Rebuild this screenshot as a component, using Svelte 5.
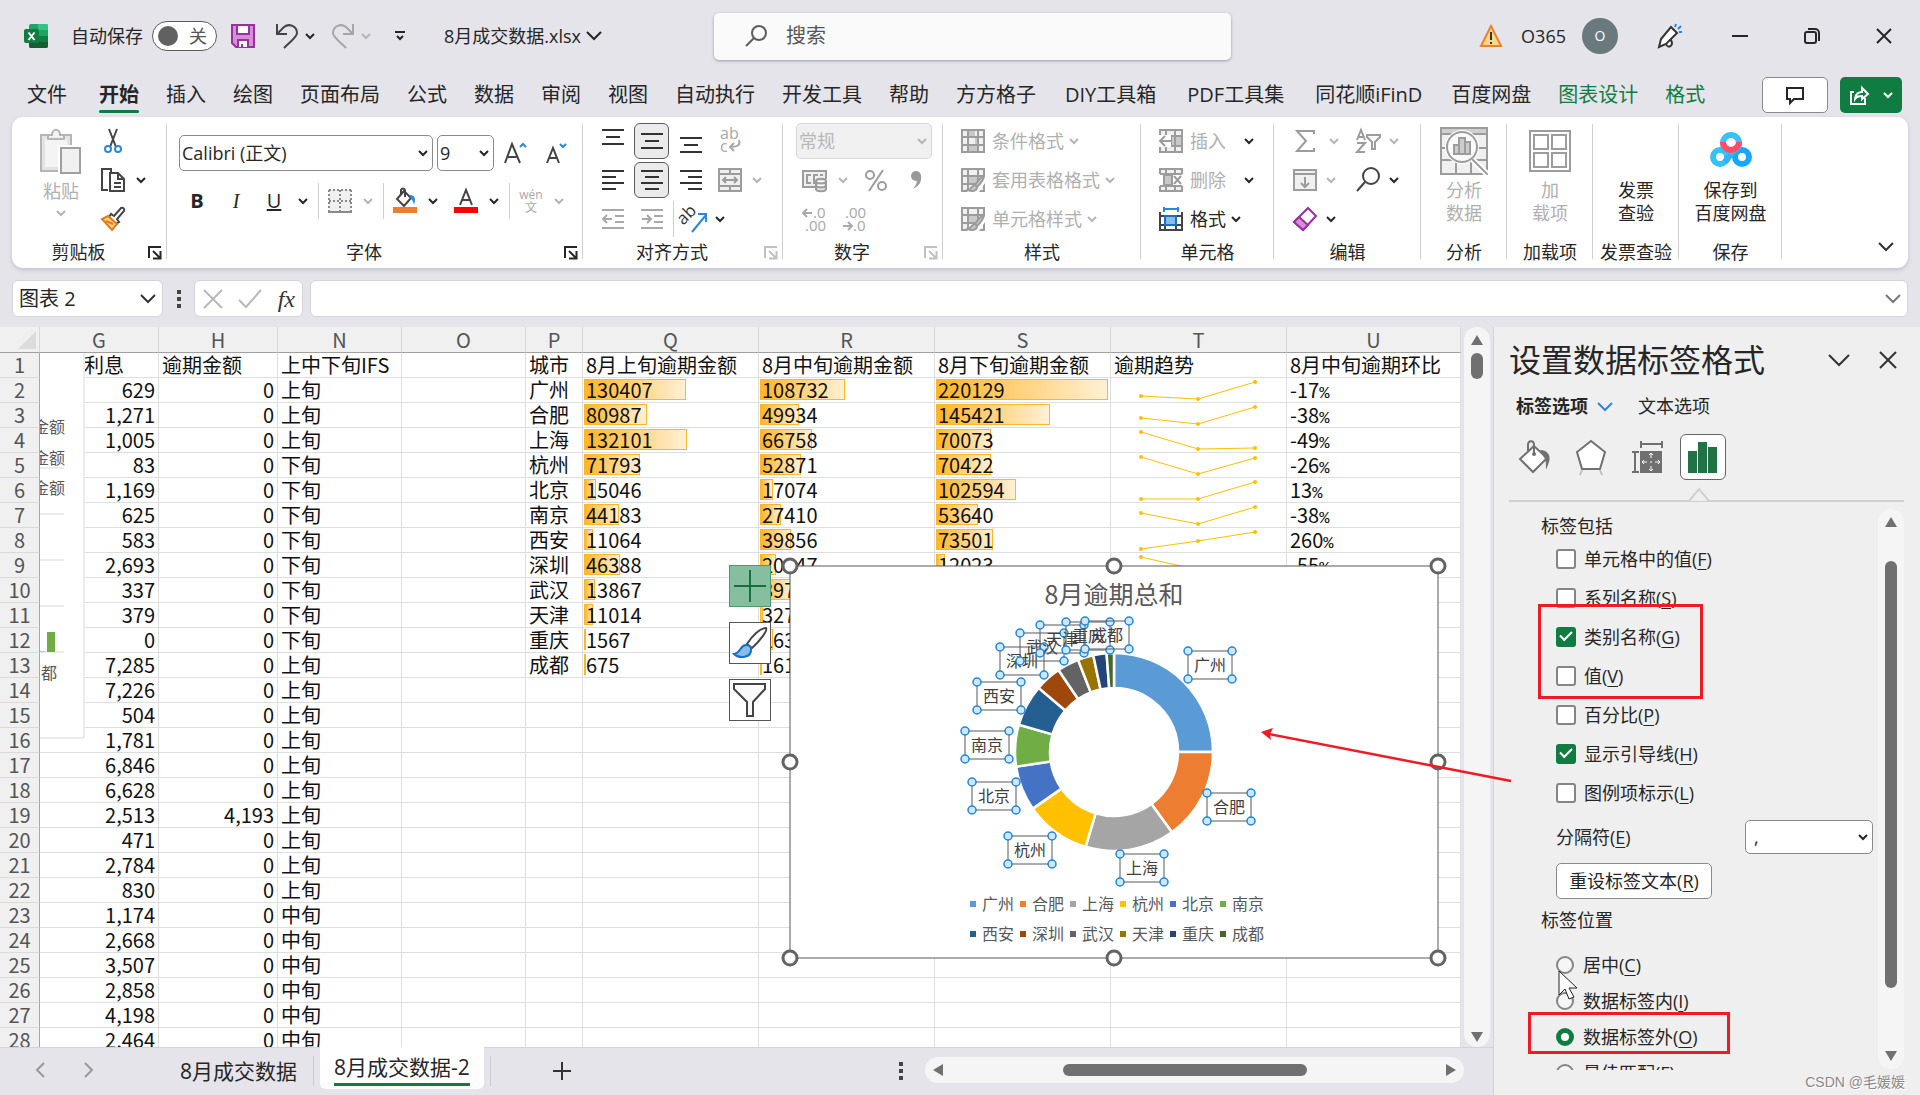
<script>
  const tabs = ['文件', '开始', '插入', '绘图', '页面布局', '公式', '数据', '审阅', '视图', '自动执行', '开发工具', '帮助', '方方格子', 'DIY工具箱', 'PDF工具集', '同花顺iFinD', '百度网盘', '图表设计', '格式'];
  const cols = ['G', 'H', 'N', 'O', 'P', 'Q', 'R', 'S', 'T', 'U'];

  const interest = ['629', '1,271', '1,005', '83', '1,169', '625', '583', '2,693', '337', '379', '0', '7,285', '7,226', '504', '1,781', '6,846', '6,628', '2,513', '471', '2,784', '830', '1,174', '2,668', '3,507', '2,858', '4,198', '2,464'];
  const cities = [
    { name: '广州', v: [130407, 108732, 220129], pct: '-17' },
    { name: '合肥', v: [80987, 49934, 145421], pct: '-38' },
    { name: '上海', v: [132101, 66758, 70073], pct: '-49' },
    { name: '杭州', v: [71793, 52871, 70422], pct: '-26' },
    { name: '北京', v: [15046, 17074, 102594], pct: '13' },
    { name: '南京', v: [44183, 27410, 53640], pct: '-38' },
    { name: '西安', v: [11064, 39856, 73501], pct: '260' },
    { name: '深圳', v: [46388, 20347, 12023], pct: '-55' },
    { name: '武汉', v: [13867, 39786] },
    { name: '天津', v: [11014, 3271] },
    { name: '重庆', v: [1567, 16327] },
    { name: '成都', v: [675, 1610] }
  ];
  const period = (row) => (row <= 4 || (row >= 13 && row <= 22) ? '上旬' : row <= 12 ? '下旬' : '中旬');
  const rows = interest.map((g, i) => ({
    n: i + 2,
    g,
    h: i === 17 ? '4,193' : '0',
    p: period(i + 2),
    c: cities[i]
  }));
  const peak = 220129;
  const spark = (v) => {
    const lo = Math.min(...v);
    const hi = Math.max(...v);
    return v.map((x, i) => [30 + i * 57, Math.round(21 - ((x - lo) / (hi - lo)) * 17)]);
  };

  const slices = [
    { name: '广州', end: 90, color: '#5b9bd5', x: 398, y: 85 },
    { name: '合肥', end: 144.2, color: '#ed7d31', x: 417, y: 227 },
    { name: '上海', end: 196.7, color: '#a5a5a5', x: 330, y: 288 },
    { name: '杭州', end: 235.1, color: '#ffc000', x: 218, y: 270 },
    { name: '北京', end: 261.5, color: '#4472c4', x: 182, y: 216 },
    { name: '南京', end: 286, color: '#70ad47', x: 175, y: 165 },
    { name: '西安', end: 310.4, color: '#255e91', x: 187, y: 116 },
    { name: '深圳', end: 325.9, color: '#9e480e', x: 210, y: 81 },
    { name: '武汉', end: 338.7, color: '#636363', x: 230, y: 67 },
    { name: '天津', end: 347.9, color: '#997300', x: 250, y: 59 },
    { name: '重庆', end: 355.7, color: '#264478', x: 276, y: 56 },
    { name: '成都', end: 360, color: '#43682b', x: 295, y: 55 }
  ];
  const CX = 324;
  const CY = 186;
  const pt = (r, deg) => {
    const a = (deg * Math.PI) / 180;
    return `${(CX + r * Math.sin(a)).toFixed(2)} ${(CY - r * Math.cos(a)).toFixed(2)}`;
  };
  const arc = (a, b) => `M${pt(99, a)}A99 99 0 0 1 ${pt(99, b)}L${pt(64, b)}A64 64 0 0 0 ${pt(64, a)}Z`;
  const handles = [[0, 0], [324, 0], [648, 0], [0, 196], [648, 196], [0, 392], [324, 392], [648, 392]];

  let checks = $state([
    { t: '单元格中的值', k: 'F', on: false },
    { t: '系列名称', k: 'S', on: false },
    { t: '类别名称', k: 'G', on: true },
    { t: '值', k: 'V', on: false },
    { t: '百分比', k: 'P', on: false },
    { t: '显示引导线', k: 'H', on: true },
    { t: '图例项标示', k: 'L', on: false }
  ]);
  let position = $state('O');
  const positions = [
    { t: '居中', k: 'C' },
    { t: '数据标签内', k: 'I' },
    { t: '数据标签外', k: 'O' },
    { t: '最佳匹配', k: 'F' }
  ];
</script>

{#snippet chev(off = false)}
  <svg class="chev" class:off width="20" height="20" viewBox="0 0 20 20"><path d="M6 8l4 4 4-4" /></svg>
{/snippet}
{#snippet launcher(off = false)}
  <button class="launch" class:off aria-label="更多选项">
    <svg width="14" height="14" viewBox="0 0 14 14"><path d="M1 12V1h12M5 5l7 7M12.5 5v7.5H5" /></svg>
  </button>
{/snippet}
{#snippet lines(a, y0, short, n = 3)}
  <svg width="24" height="24" viewBox="0 0 24 24" class="ln">
    {#each Array(n) as _, i}
      {@const w = i % 2 ? short : 22}
      {@const x = a === 'l' ? 1 : a === 'r' ? 23 - w : 12 - w / 2}
      <path d="M{x} {y0 + i * (n === 4 ? 6 : 7)}h{w}" />
    {/each}
  </svg>
{/snippet}
{#snippet tableIcon(kind)}
  <svg width="24" height="24" viewBox="0 0 24 24" class="tbl">
    <rect x="1" y="1" width="22" height="22" fill="#f0f0f0" />
    {#if kind === 'cond'}
      <path d="M6 1h8v7H6zM6 16h12v6H6zM14 8h4v8h-4z" fill="#c8c8c8" stroke="none" />
    {:else}
      <path d="M7 8h10v8H7z" fill="#c8c8c8" stroke="none" />
    {/if}
    <path d="M1 1h22v22H1zM1 8h22M1 16h22M7 1v22M17 1v22" />
    {#if kind === 'brush'}
      <path d="M24 7l-9 9-9 8h12l6-9z" fill="#fff" stroke="none" />
      <path d="M23 8c-3 1-7 6-9 9l2 2c3-3 7-7 7-11zM14 17c-3 0-3 4-7 5 4 2 9 1 9-3z" fill="#c8c8c8" />
    {/if}
  </svg>
{/snippet}

<div class="app">
  <header class="title">
    <div class="t-left">
      <svg width="24" height="24" viewBox="0 0 24 24">
        <rect x="5" y="0" width="19" height="24" rx="2" fill="#21a366" />
        <path d="M14 0h8a2 2 0 0 1 2 2v4H14z" fill="#33c481" />
        <path d="M5 12h9v6H5z" fill="#107c41" /><path d="M14 12h10v6H14z" fill="#107c41" />
        <path d="M5 18h19v4a2 2 0 0 1-2 2H7a2 2 0 0 1-2-2z" fill="#185c37" />
        <rect x="0" y="5" width="15" height="14" rx="2" fill="#107c41" />
        <path d="M4.500 8.500l6 7.500M10.500 8.500l-6 7.500" stroke="#fff" stroke-width="2" />
      </svg>
      <span class="auto">自动保存</span>
      <button class="toggle" role="switch" aria-checked="false"><i></i>关</button>
      <button class="ic save" aria-label="保存">
        <svg width="24" height="24" viewBox="0 0 24 24"><path d="M1 1h22v22H5l-4-4z" fill="#d48fd8" stroke="#9a2fa0" stroke-width="2" /><path d="M6 1h12v9H6zM7 23v-7h10v7" fill="#fff" stroke="#9a2fa0" stroke-width="2" /><path d="M11 20v3" stroke="#9a2fa0" stroke-width="2" /></svg>
      </button>
      <button class="ic undo" aria-label="撤消">
        <svg width="24" height="24" viewBox="0 0 24 24"><path d="M2 0v10h10M2 10l7-7c5-4 13-1 13 6 0 4-5 7-13 15" /></svg>
      </button>
      {@render chev()}
      <button class="ic redo" aria-label="恢复">
        <svg width="24" height="24" viewBox="0 0 24 24"><path d="M22 0v10H12M22 10l-7-7C10-1 2 2 2 9c0 4 5 7 13 15" /></svg>
      </button>
      {@render chev(true)}
      <svg class="cust" width="12" height="12" viewBox="0 0 12 12"><path d="M1 2h10M3 6l3 3 3-3" /></svg>
      <span class="file">8月成交数据.xlsx</span>
      <svg class="big" width="16" height="16" viewBox="0 0 16 16"><path d="M1 4l7 7 7-7" /></svg>
    </div>
    <label class="search">
      <svg width="22" height="22" viewBox="0 0 22 22"><circle cx="14" cy="8" r="7" /><path d="M9 13l-8 8" /></svg>
      <input type="text" placeholder="搜索" aria-label="搜索" />
    </label>
    <div class="t-right">
      <svg class="warn" width="24" height="24" viewBox="0 0 24 24"><path d="M12 2l10 20H2z" fill="#fbd98c" stroke="#e8832a" stroke-width="2" /><path d="M12 8v8M12 18v2" stroke="#333" stroke-width="2" /></svg>
      <span class="acct">O365</span>
      <span class="avatar">O</span>
      <svg class="mega" width="26" height="26" viewBox="0 0 26 26"><path d="M2 24l2-8L14 4l6 6L9 21zM9 21c2 5 8 2 5-4" fill="#fff" stroke="#333" stroke-width="2" /><path d="M18 4l1-3M21 6l3-3M22 9h3" stroke="#2b88d8" stroke-width="2" /></svg>
      <button class="win" aria-label="最小化"><svg width="16" height="16" viewBox="0 0 16 16"><path d="M0 8h16" /></svg></button>
      <button class="win" aria-label="还原"><svg width="16" height="16" viewBox="0 0 16 16"><rect x="1" y="4" width="11" height="11" rx="2" /><path d="M4 1h7a4 4 0 0 1 4 4v8" /></svg></button>
      <button class="win" aria-label="关闭"><svg width="16" height="16" viewBox="0 0 16 16"><path d="M1 1l14 14M15 1L1 15" /></svg></button>
    </div>
  </header>

  <nav class="tabs">
    {#each tabs as t, i}
      <button class="tab" class:lead={i === 0} class:active={i === 1} class:latin={/[A-Z]/.test(t)} class:green={i > 16}>{t}</button>
    {/each}
    <button class="comment" aria-label="批注"><svg width="18" height="18" viewBox="0 0 18 18"><path d="M1 2h16v11H8l-4 4v-4H1z" /></svg></button>
    <button class="share" aria-label="共享">
      <svg width="20" height="20" viewBox="0 0 20 20"><path d="M5 7H2v12h14v-6M6 14c0-5 4-7 7-7V3l6 6-6 5v-3c-3 0-5 0-7 3z" /></svg>
      <svg width="10" height="10" viewBox="0 0 10 10"><path d="M1 3l4 4 4-4" stroke-width="2" /></svg>
    </button>
  </nav>

  <section class="ribbon">
    <div class="group g-clip">
      <div class="g-body">
        <button class="paste">
          <svg width="44" height="46" viewBox="0 0 44 46"><path d="M2 6h30v36H2z" fill="#e3e3e3" stroke="#b5b5b5" stroke-width="2" /><path d="M6 10h22v28H6z" fill="#f4f4f4" /><path d="M9 10V6h4c0-7 8-7 8 0h4v4z" fill="#f2f2f2" stroke="#b5b5b5" stroke-width="2" /><path d="M19 16h24v30H19z" fill="#fff" /><path d="M22 19h19v25H22z" fill="#f0f0f0" stroke="#a0a0a0" stroke-width="2" /></svg>
          <span>粘贴</span>
          {@render chev(true)}
        </button>
        <div class="stack">
          <div class="row"><button class="ic" aria-label="剪切"><svg width="24" height="24" viewBox="0 0 24 24"><path d="M8 0l7 18M16 0L9 18" stroke="#444" stroke-width="2" /><circle cx="7" cy="20" r="3" fill="none" stroke="#2b88d8" stroke-width="2" /><circle cx="17" cy="20" r="3" fill="none" stroke="#2b88d8" stroke-width="2" /></svg></button></div>
          <div class="row"><button class="ic" aria-label="复制"><svg width="24" height="24" viewBox="0 0 24 24"><path d="M7 22H1V1h9v3" fill="none" stroke="#444" stroke-width="2" /><path d="M9 5h8l6 6v12H9z" fill="#fff" stroke="#444" stroke-width="2" /><path d="M17 5v6h6M13 15h7M13 19h7" fill="none" stroke="#444" stroke-width="2" /></svg></button>{@render chev()}</div>
          <div class="row"><button class="ic" aria-label="格式刷"><svg width="24" height="24" viewBox="0 0 24 24"><path d="M13 9l7-8c2-1 4 1 3 3l-7 8 2 3-3 2-7-7 2-3z" fill="#fff" stroke="#444" stroke-width="2" /><path d="M7 9l9 8-5 6L1 12z" fill="#fbd08a" stroke="#e07b1a" stroke-width="2" /><path d="M5 14l7 3" stroke="#e07b1a" stroke-width="2" /></svg></button></div>
        </div>
      </div>
      <div class="g-label"><span>剪贴板</span>{@render launcher()}</div>
    </div>

    <div class="group g-font">
      <div class="g-body col">
        <div class="fr1">
          <span class="sel fname"><select aria-label="字体"><option>Calibri (正文)</option></select>{@render chev()}</span>
          <span class="sel fsize"><select aria-label="字号"><option>9</option></select>{@render chev()}</span>
          <button class="ic gr" aria-label="增大字号"><svg width="24" height="24" viewBox="0 0 24 24"><path d="M1 22L8 3l8 19M4 16h9" stroke="#444" stroke-width="2" fill="none" /><path d="M16 6l3-3 3 3" stroke="#2b88d8" stroke-width="2" fill="none" /></svg></button>
          <button class="ic sh" aria-label="减小字号"><svg width="24" height="24" viewBox="0 0 24 24"><path d="M3 22L9 7l6 15M5 17h8" stroke="#444" stroke-width="2" fill="none" /><path d="M16 3l3 3 3-3" stroke="#2b88d8" stroke-width="2" fill="none" /></svg></button>
        </div>
        <div class="fr2">
          <button class="biu b">B</button><button class="biu i">I</button><button class="biu u">U</button>{@render chev()}
          <i class="vs"></i>
          <button class="ic" aria-label="边框"><svg width="24" height="24" viewBox="0 0 24 24"><rect x="1" y="1" width="22" height="21" fill="#f0f0f0" /><path d="M1 1h22M1 12h22M1 1v21M12 1v21M23 1v21" stroke="#8a8a8a" stroke-width="2" stroke-dasharray="2 2" /><path d="M0 23h24" stroke="#8a8a8a" stroke-width="2" /></svg></button>{@render chev(true)}
          <i class="vs"></i>
          <button class="ic" aria-label="填充颜色"><svg width="24" height="24" viewBox="0 0 24 24"><path d="M11 2L4 10l7 7 7-8zM8 6V1c1-2 4-2 4 1v6" fill="#fff" stroke="#444" stroke-width="2" /><path d="M17 6c5 0 6 4 4 10-1-4-2-6-4-7z" fill="#2b88d8" /><path d="M0 18h24v6H0z" fill="#ed7d31" /></svg></button>{@render chev()}
          <button class="ic fc" aria-label="字体颜色"><svg width="24" height="24" viewBox="0 0 24 24"><path d="M6 16l6-15 6 15M8 11h8" fill="none" stroke="#444" stroke-width="2" /><path d="M0 18h24v6H0z" fill="#f00" /></svg></button>{@render chev()}
          <i class="vs"></i>
          <button class="wen" aria-label="拼音指南"><span>wén</span><span>文</span></button>{@render chev(true)}
        </div>
      </div>
      <div class="g-label"><span>字体</span>{@render launcher()}</div>
    </div>

    <div class="group g-align">
      <div class="g-body col">
        <div class="row">
          <button class="al" aria-label="顶端对齐">{@render lines('c', 1, 14)}</button>
          <button class="al on" aria-label="垂直居中">{@render lines('c', 5, 14)}</button>
          <button class="al" aria-label="底端对齐">{@render lines('c', 9, 14)}</button>
          <button class="ic m8" aria-label="自动换行"><svg width="24" height="26" viewBox="0 0 24 26"><text x="2" y="11" font-size="16" fill="#a8a8a8">ab</text><text x="2" y="24" font-size="16" fill="#a8a8a8">c</text><path d="M21 12c2 6-3 7-9 7M16 15l-4 4 4 4" fill="none" stroke="#a8a8a8" stroke-width="2" /></svg></button>
        </div>
        <div class="row">
          <button class="al" aria-label="左对齐">{@render lines('l', 3, 14, 4)}</button>
          <button class="al on" aria-label="居中">{@render lines('c', 3, 14, 4)}</button>
          <button class="al" aria-label="右对齐">{@render lines('r', 3, 14, 4)}</button>
          <button class="ic m8" aria-label="合并后居中"><svg width="24" height="24" viewBox="0 0 24 24" class="tbl"><path d="M1 1h22v22H1z" fill="#f0f0f0" /><path d="M1 6h22M1 18h22M12 1v5M12 18v5M5 12h14M8 9l-3 3 3 3M16 9l3 3-3 3" /></svg></button>
          {@render chev(true)}
        </div>
        <div class="row dim">
          <button class="al" aria-label="减少缩进"><svg width="24" height="24" viewBox="0 0 24 24"><path d="M1 3h22M14 9h9M14 15h9M1 21h22M11 12H2M6 8l-4 4 4 4" /></svg></button>
          <button class="al" aria-label="增加缩进"><svg width="24" height="24" viewBox="0 0 24 24"><path d="M1 3h22M14 9h9M14 15h9M1 21h22M2 12h9M7 8l4 4-4 4" /></svg></button>
          <i class="vs tight"></i>
          <button class="ic" aria-label="方向"><svg width="26" height="26" viewBox="0 0 26 26"><text x="0" y="14" font-size="17" fill="#333" transform="rotate(-45 8 14)">ab</text><path class="blue" d="M11 26L25 9M17 8h8v8" /></svg></button>
          {@render chev()}
        </div>
      </div>
      <div class="g-label"><span>对齐方式</span>{@render launcher(true)}</div>
    </div>

    <div class="group g-num">
      <div class="g-body col">
        <div class="row"><span class="sel nf"><select aria-label="数字格式" disabled><option>常规</option></select>{@render chev(true)}</span></div>
        <div class="row in">
          <svg width="26" height="26" viewBox="0 0 26 26" class="tbl"><path d="M1 4h23v16H1z" fill="#f0f0f0" /><path d="M9 8H5v8h4M16 8h-4v8h2M21 8h-3" /><path d="M13 12h12v13H13z" fill="#fff" stroke="none" /><path d="M14 14c0-3 10-3 10 0v8c0 3-10 3-10 0zM14 14c0 3 10 3 10 0M14 18c0 3 10 3 10 0" fill="#ddd" /></svg>
          {@render chev(true)}
          <svg class="pc" width="24" height="24" viewBox="0 0 24 24"><circle cx="6" cy="7" r="4" /><circle cx="18" cy="18" r="4" /><path d="M19 2L5 23" /></svg>
          <svg class="cm" width="14" height="20" viewBox="0 0 14 20"><circle cx="7" cy="6" r="5" fill="#999" /><path d="M12 5c1 7-2 11-8 14 3-4 4-6 4-9z" fill="#999" /></svg>
        </div>
        <div class="row in">
          <svg width="26" height="26" viewBox="0 0 26 26" class="dec"><path d="M10 7H1M5 3L1 7l4 4" /><text x="11" y="12">.0</text><text x="3" y="25">.00</text></svg>
          <svg width="26" height="26" viewBox="0 0 26 26" class="dec d2"><text x="3" y="12">.00</text><path d="M1 20h9M6 16l4 4-4 4" /><text x="11" y="25">.0</text></svg>
        </div>
      </div>
      <div class="g-label"><span>数字</span>{@render launcher(true)}</div>
    </div>

    <div class="group g-style">
      <div class="g-body col">
        <button class="row cmd off">{@render tableIcon('cond')}<span>条件格式</span>{@render chev(true)}</button>
        <button class="row cmd off">{@render tableIcon('brush')}<span>套用表格格式</span>{@render chev(true)}</button>
        <button class="row cmd off">{@render tableIcon('brush')}<span>单元格样式</span>{@render chev(true)}</button>
      </div>
      <div class="g-label"><span>样式</span></div>
    </div>

    <div class="group g-cell">
      <div class="g-body col">
        <button class="row cmd off"><svg width="24" height="24" viewBox="0 0 24 24" class="tbl"><path d="M1 1h22v22H1z" fill="#f0f0f0" /><path d="M12 7h11v10H12z" fill="#c8c8c8" /><path d="M1 7h22M1 17h22M7 1v22M16 1v22" /><path d="M0 6h12v12H0z" fill="#fff" stroke="none" /><path d="M12 12H1M6 7l-5 5 5 5" /></svg><span>插入</span><i class="sp"></i>{@render chev()}</button>
        <button class="row cmd off"><svg width="24" height="24" viewBox="0 0 24 24" class="tbl"><path d="M1 6V1h22v5M1 18v5h22v-5M1 6h22M1 18h22M7 1v5M16 1v5M7 18v5M16 18v5" fill="#f0f0f0" /><path d="M5 7h8v10H5z" fill="#c8c8c8" /><path d="M15 8l7 8M22 8l-7 8" /></svg><span>删除</span><i class="sp"></i>{@render chev()}</button>
        <button class="row cmd"><svg width="24" height="24" viewBox="0 0 24 24"><path d="M1 5v18h22V5M1 9h22M1 18h22M6 9v14M17 9v14" fill="none" stroke="#444" stroke-width="2" /><path d="M6 9h11v9H6z" fill="#83beec" stroke="#1a6fc0" stroke-width="2" /><path d="M5 2h14M5 0v5M19 0v5" stroke="#2b88d8" stroke-width="2" /></svg><span>格式</span>{@render chev()}</button>
      </div>
      <div class="g-label"><span>单元格</span></div>
    </div>

    <div class="group g-edit">
      <div class="g-body col">
        <div class="row"><svg width="24" height="24" viewBox="0 0 24 24" class="tbl"><path d="M21 5V2H4l9 10-9 10h17v-3" /></svg><span class="w3"></span>{@render chev(true)}
          <svg class="az" width="26" height="26" viewBox="0 0 26 26"><g class="tbl"><path d="M2 12L6 2l4 10M3 9h6M2 15h8L2 24h8M12 7h13v2l-5 5v7h-3v-7l-5-5z" /></g></svg>{@render chev(true)}</div>
        <div class="row"><svg width="24" height="24" viewBox="0 0 24 24" class="tbl"><path d="M1 2h22v20H1z" fill="#f0f0f0" /><path d="M1 6h22M12 9v10M8 15l4 4 4-4" /></svg>{@render chev(true)}
          <svg class="az fnd" width="26" height="26" viewBox="0 0 26 26"><circle cx="16" cy="9" r="8" fill="none" stroke="#444" stroke-width="2" /><path d="M10 15L2 24" stroke="#444" stroke-width="2" /></svg>{@render chev()}</div>
        <div class="row"><svg width="24" height="24" viewBox="0 0 24 24"><path d="M15 1l8 8L10 23l-9-8z" fill="#fff" stroke="#9a2fa0" stroke-width="2" /><path d="M6 10l9 8-5 5-9-8z" fill="#d48fd8" stroke="#9a2fa0" stroke-width="2" /></svg>{@render chev()}</div>
      </div>
      <div class="g-label"><span>编辑</span></div>
    </div>

    <div class="group g-one">
      <button class="tall off"><svg width="48" height="48" viewBox="0 0 48 48" class="tbl"><path d="M1 1h46v46H1z" fill="#f0f0f0" /><path d="M1 1h46v6H1z" fill="#d0d0d0" /><path d="M1 21h46M1 33h46M16 33v14M31 33v14" /><path d="M32 32l15 15" stroke="#fff" stroke-width="6" /><circle cx="22" cy="20" r="17" fill="#fff" stroke="none" /><circle cx="22" cy="20" r="15" fill="#fafafa" /><path d="M14 18h6v9h-6zM25 15h5v12h-5z" fill="#ccc" /><path d="M19 11h6v16h-6z" fill="#ccc" /><path d="M32 32l15 15" /></svg><span>分析<br />数据</span></button>
      <div class="g-label"><span>分析</span></div>
    </div>
    <div class="group g-one">
      <button class="tall off"><svg width="48" height="48" viewBox="0 0 48 48" class="tbl"><path d="M4 4h40v40H4zM8 8h14v14H8zM26 8h14v14H26zM8 26h14v14H8zM26 26h14v14H26z" /></svg><span>加<br />载项</span></button>
      <div class="g-label"><span>加载项</span></div>
    </div>
    <div class="group g-one">
      <button class="tall"><span>发票<br />查验</span></button>
      <div class="g-label"><span>发票查验</span></div>
    </div>
    <div class="group g-save">
      <button class="tall"><svg width="48" height="48" viewBox="0 0 48 48"><g fill="none" stroke-width="6"><circle cx="13" cy="30" r="7" stroke="#35c3f3" /><circle cx="35" cy="30" r="7" stroke="#1aa7fb" /><path d="M18 35l12-15" stroke="#2bb5f7" /><circle cx="24" cy="16" r="8" stroke="#35c3f3" /><path d="M16 15a8 8 0 0 0 16 0" stroke="#ff4d6a" /></g></svg><span>保存到<br />百度网盘</span></button>
      <div class="g-label"><span>保存</span></div>
    </div>
    <button class="collapse" aria-label="折叠功能区"><svg width="16" height="16" viewBox="0 0 16 16"><path d="M1 4l7 7 7-7" /></svg></button>
  </section>

  <section class="fbar">
    <label class="name"><input type="text" value="图表 2" aria-label="名称框" /><svg width="16" height="16" viewBox="0 0 16 16"><path d="M1 4l7 7 7-7" /></svg></label>
    <svg class="dots" width="4" height="18" viewBox="0 0 4 18"><path d="M0 0h4v4H0zM0 7h4v4H0zM0 14h4v4H0z" /></svg>
    <div class="fx">
      <svg width="20" height="20" viewBox="0 0 20 20"><path d="M1 1l18 18M19 1L1 19" /></svg>
      <svg width="24" height="20" viewBox="0 0 24 20"><path d="M1 11l7 7L23 1" /></svg>
      <em>fx</em>
    </div>
    <label class="formula"><input type="text" aria-label="编辑栏" /><svg width="16" height="16" viewBox="0 0 16 16"><path d="M1 4l7 7 7-7" /></svg></label>
  </section>

  <main class="body">
    <div class="work">
      <div class="sheet">
        <div class="grid">
          <table>
            <colgroup><col class="c0" /><col class="cG" /><col class="cH" /><col class="cN" /><col class="cN" /><col class="cP" /><col class="cQ" /><col class="cQ" /><col class="cQ" /><col class="cQ" /><col /></colgroup>
            <thead><tr><th class="corner"><svg width="18" height="18" viewBox="0 0 18 18"><path d="M18 0v18H0z" fill="#dcdcdc" /></svg></th>{#each cols as c}<th>{c}</th>{/each}</tr></thead>
            <tbody>
              <tr><th>1</th><td class="first">利息</td><td>逾期金额</td><td>上中下旬IFS</td><td></td><td>城市</td><td>8月上旬逾期金额</td><td>8月中旬逾期金额</td><td>8月下旬逾期金额</td><td>逾期趋势</td><td>8月中旬逾期环比</td></tr>
              {#each rows as r}
                <tr>
                  <th>{r.n}</th><td class="num">{r.g}</td><td class="num">{r.h}</td><td>{r.p}</td><td></td>
                  <td>{r.c ? r.c.name : ''}</td>
                  {#each [0, 1, 2] as k}
                    <td class="barcell">{#if r.c?.v[k]}<div class="stackbar"><div class="track"><div class="bar" style="width:{(r.c.v[k] / peak) * 100}%"></div></div><span>{r.c.v[k]}</span></div>{/if}</td>
                  {/each}
                  <td class="sparkcell">{#if r.c?.pct}
                    {@const p = spark(r.c.v)}
                    <svg width="174" height="24" viewBox="0 0 174 24"><polyline points={p.map((q) => q.join(',')).join(' ')} fill="none" stroke="#ffc000" />{#each p as q}<circle cx={q[0]} cy={q[1]} r="2" fill="#ffc000" />{/each}</svg>
                  {/if}</td>
                  <td>{#if r.c?.pct}<div class="pctcell">{r.c.pct}<span class="pct">%</span></div>{/if}</td>
                </tr>
              {/each}
            </tbody>
          </table>

          <svg class="mini" width="45" height="389" viewBox="0 0 45 389">
            <rect width="45" height="386" fill="#fff" /><path d="M44 0v385H0" fill="none" stroke="#d9d9d9" />
            <path d="M0 115h24M0 161h24M0 207h24M0 253h24M0 299h24" stroke="#d9d9d9" />
            <g font-size="16" fill="#595959" text-anchor="end"><text x="25" y="80">金额</text><text x="25" y="111">金额</text><text x="25" y="141">金额</text><text x="17" y="326">都</text></g>
            <path d="M7 279h8v20H7z" fill="#70ad47" /><path d="M0 298h5v1H0z" fill="#ffc000" />
          </svg>

          <svg class="chart" width="672" height="416" viewBox="-12 -12 672 416">
            <rect width="648" height="392" fill="#fff" stroke="#595959" />
            <text x="324" y="38" font-size="25" text-anchor="middle" fill="#595959">8月逾期总和</text>
            {#each slices as s, i}
              <path d={arc(i ? slices[i - 1].end : 0, s.end)} fill={s.color} stroke="#fff" stroke-width="2.500" />
            {/each}
            {#each slices as s, i}
              <rect x={s.x} y={s.y} width="44" height="28" fill="none" stroke="#595959" />
              <text x={s.x + 22} y={s.y + 20} font-size="16" text-anchor="middle" fill="#404040">{s.name}</text>
              {#each [[0, 0], [44, 0], [0, 28], [44, 28]] as h}
                <circle cx={s.x + h[0]} cy={s.y + h[1]} r="4" fill="#cfe6f8" stroke="#1e88d6" stroke-width="1.500" />
              {/each}
              <rect x={180 + (i % 6) * 50} y={i < 6 ? 335 : 365} width="6" height="6" fill={s.color} />
              <text x={192 + (i % 6) * 50} y={i < 6 ? 344 : 374} font-size="16" fill="#595959">{s.name}</text>
            {/each}
            {#each handles as h}<circle cx={h[0]} cy={h[1]} r="7" fill="#fff" stroke="#636363" stroke-width="3" />{/each}
          </svg>

          <div class="cbtns">
            <button class="plus" aria-label="图表元素"><svg width="32" height="32" viewBox="0 0 32 32"><path d="M16 0v32M0 16h32" stroke="#15713b" stroke-width="2" /></svg></button>
            <button aria-label="图表样式"><svg width="34" height="34" viewBox="0 0 34 34"><path d="M14 18C19 10 27 2 33 2c2 2-6 13-14 20z" fill="#fff" stroke="#444" stroke-width="2" /><path d="M13 19c-6 0-5 8-12 9 5 5 18 4 17-5 0-2-2-4-5-4z" fill="#83beec" stroke="#1a6fc0" stroke-width="2" /></svg></button>
            <button aria-label="图表筛选器"><svg width="34" height="36" viewBox="0 0 34 36"><path d="M1 2h31v5L20 20v14h-6V20L1 7z" fill="#fafafa" stroke="#444" stroke-width="2" /></svg></button>
          </div>
        </div>
        <div class="vscroll">
          <svg width="14" height="12" viewBox="0 0 14 12"><path d="M7 1l6 10H1z" /></svg><i></i><span></span>
          <svg width="14" height="12" viewBox="0 0 14 12"><path d="M7 11L1 1h12z" /></svg>
        </div>
      </div>
      <footer class="foot">
        <div class="arrows"><svg width="10" height="16" viewBox="0 0 10 16"><path d="M9 1L2 8l7 7" /></svg><svg width="10" height="16" viewBox="0 0 10 16"><path d="M1 1l7 7-7 7" /></svg></div>
        <button class="st">8月成交数据</button>
        <button class="st cur"><span>8月成交数据-2</span></button>
        <button class="add" aria-label="新建工作表"><svg width="18" height="18" viewBox="0 0 18 18"><path d="M9 0v18M0 9h18" /></svg></button>
        <svg class="dots" width="4" height="18" viewBox="0 0 4 18"><path d="M0 0h4v4H0zM0 7h4v4H0zM0 14h4v4H0z" /></svg>
        <div class="hscroll"><svg width="12" height="14" viewBox="0 0 12 14"><path d="M1 7l10-6v12z" /></svg><i></i><svg width="12" height="14" viewBox="0 0 12 14"><path d="M11 7L1 1v12z" /></svg></div>
      </footer>
    </div>

    <aside class="pane">
      <div class="p-head"><h2>设置数据标签格式</h2>
        <button class="win2" aria-label="任务窗格选项"><svg width="22" height="16" viewBox="0 0 22 16"><path d="M1 3l10 10L21 3" /></svg></button>
        <button class="win2" aria-label="关闭窗格"><svg width="16" height="16" viewBox="0 0 16 16"><path d="M0 0l16 16M16 0L0 16" /></svg></button>
      </div>
      <div class="p-tabs"><b>标签选项</b><svg width="16" height="10" viewBox="0 0 16 10"><path d="M1 1l7 7 7-7" /></svg><span>文本选项</span></div>
      <div class="p-icons">
        <button aria-label="填充与线条"><svg width="34" height="34" viewBox="0 0 34 34"><path d="M16 6L2 19l13 13 14-14z" fill="#fff" stroke="#707070" stroke-width="2" /><path d="M22 10c8 0 11 6 9 12l-3 8c0-8 0-11-3-14z" fill="#707070" /><path d="M10 11V5c0-5 6-5 6 0v8" fill="none" stroke="#707070" stroke-width="2" /><circle cx="16" cy="14" r="2" fill="#707070" /></svg></button>
        <button aria-label="效果"><svg width="32" height="36" viewBox="0 0 32 36"><path d="M16 2l14 11-5 17H7L2 13z" fill="#fff" stroke="#707070" stroke-width="2" /><path d="M7 31l-2 5M25 31l2 5" stroke="#c0c0c0" stroke-width="2" /></svg></button>
        <button aria-label="大小与属性"><svg width="32" height="34" viewBox="0 0 32 34"><path d="M10 4h21M10 1v7M31 1v7M4 12v20M1 12h7M1 32h7" stroke="#707070" stroke-width="2" fill="none" /><rect x="9" y="11" width="22" height="22" fill="#707070" /><path d="M20 13v5M20 26v5M11 22h5M24 22h5M18 15l2-2 2 2M18 29l2 2 2-2M13 20l-2 2 2 2M27 20l2 2-2 2M19 22h2" stroke="#fff" fill="none" /></svg></button>
        <button class="on" aria-label="标签选项"><svg width="30" height="32" viewBox="0 0 30 32"><path d="M0 10h9v22H0zM10 1h9v31h-9zM20 6h9v26h-9z" fill="#217346" /></svg></button>
      </div>
      <div class="rule"><svg width="22" height="15" viewBox="0 0 22 15"><path d="M1 14L11 2l10 12" fill="#efefef" stroke="#d0d0d0" stroke-width="2" /></svg></div>
      <div class="p-scroll">
        <div class="opts">
          <h3>标签包括</h3>
          {#each checks as c}
            <label class="ck"><input type="checkbox" bind:checked={c.on} /><span>{c.t}(<u>{c.k}</u>)</span></label>
          {/each}
          <div class="sep-row"><label for="sepsel">分隔符(<u>E</u>)</label><span class="sel psel"><select id="sepsel"><option>,</option></select>{@render chev()}</span></div>
          <button class="reset">重设标签文本(<u>R</u>)</button>
          <h3 class="h2nd">标签位置</h3>
          {#each positions as p}
            <label class="rd"><input type="radio" name="pos" value={p.k} bind:group={position} /><span>{p.t}(<u>{p.k}</u>)</span></label>
          {/each}
        </div>
        <div class="pscroll"><svg width="14" height="12" viewBox="0 0 14 12"><path d="M7 1l6 10H1z" /></svg><i></i><svg width="14" height="12" viewBox="0 0 14 12"><path d="M7 11L1 1h12z" /></svg></div>
      </div>
      <p class="mark">CSDN @毛媛媛</p>
      <div class="red r1"></div>
      <div class="red r2"></div>
      <svg class="cursor" width="22" height="32" viewBox="0 0 22 32"><path d="M1 1v24l6-6 4 10 5-2-5-9h8z" fill="#fff" stroke="#222" /></svg>
    </aside>

    <svg class="arrow" width="256" height="58" viewBox="0 0 256 58"><path d="M252 53L10 6" stroke="#ed1c24" stroke-width="2.500" /><path d="M2 4l12-4-3 6 1 6z" fill="#ed1c24" /></svg>
  </main>
</div>

<style>
  :global(body) { margin: 0; background: #e4e4ea; }
  * { box-sizing: border-box; }
  .app {
    height: 100vh; display: flex; flex-direction: column; overflow: hidden; background: #e4e4ea; color: #262626;
    font: 18px/24px "Open Sans", "Noto Sans CJK SC", sans-serif;
  }
  button, input, select { font: inherit; color: inherit; }
  button { background: none; border: 0; padding: 0; }
  svg { display: block; flex: none; overflow: visible; }
  i { font-style: normal; }
  .chev path { fill: none; stroke: #262626; stroke-width: 2; }
  .chev.off path { stroke: #b5b5b5; }
  .tbl { fill: none; stroke: #9c9c9c; stroke-width: 2; }

  .title { height: 72px; flex: none; display: grid; grid-template-columns: 714fr 517fr 689fr; align-items: center; }
  .t-left { display: flex; align-items: center; padding-left: 24px; white-space: nowrap; }
  .auto { margin-left: 23px; }
  .toggle { width: 65px; height: 30px; margin-left: 9px; border: 1px solid #5c5c5c; border-radius: 15px; background: #fff; display: flex; align-items: center; gap: 11px; padding-left: 5px; color: #555; }
  .toggle i { width: 20px; height: 20px; border-radius: 50%; background: #616161; }
  .save { margin-left: 14px; }
  .undo { margin-left: 20px; }
  .undo path { fill: none; stroke: #444; stroke-width: 2; }
  .undo + .chev { margin-left: 1px; }
  .redo { margin-left: 11px; }
  .redo path { fill: none; stroke: #a6a6a6; stroke-width: 2; }
  .redo + .chev { margin-left: 1px; }
  .cust { margin-left: 18px; fill: none; stroke: #262626; stroke-width: 2; }
  .file { margin-left: 38px; }
  .big { margin-left: 5px; fill: none; stroke: #262626; stroke-width: 2; }
  .search { height: 47px; background: #fafafa; border-radius: 5px; box-shadow: 0 1px 3px #9999a4; display: flex; align-items: center; padding-left: 31px; gap: 19px; }
  .search svg { fill: none; stroke: #5c5c5c; stroke-width: 2; }
  .search input { flex: 1; min-width: 0; border: 0; background: none; outline: 0; padding: 0; font-size: 20px; }
  .search input::placeholder { color: #555; opacity: 1; }
  .t-right { display: flex; align-items: center; justify-content: flex-end; }
  .acct { margin: 0 16px 0 18px; }
  .avatar { width: 36px; height: 36px; border-radius: 50%; background: #69797e; color: #fff; font-size: 14px; line-height: 36px; text-align: center; }
  .mega { margin: 0 21px 0 39px; }
  .win { width: 72px; height: 40px; display: grid; place-items: center; }
  .win svg { fill: none; stroke: #262626; stroke-width: 2; }

  .tabs { height: 45px; flex: none; display: flex; align-items: center; gap: 1px; padding: 0 18px 0 14px; white-space: nowrap; }
  .tab { padding: 4px 13px 0; font-size: 20px; line-height: 28px; height: 36px; display: flex; flex-direction: column; }
  .tab.lead { margin-right: 5px; }
  .tab.latin { margin: 0 2px; }
  .tab.active { font-weight: 700; }
  .tab.active::after { content: ""; display: block; height: 3px; margin-top: 1px; background: #107c41; border-radius: 2px; }
  .tab.green { color: #107c41; }
  .comment { margin-left: auto; width: 66px; height: 36px; background: #fff; border: 1px solid #8a8a8a; border-radius: 5px; display: grid; place-items: center; flex: none; }
  .comment path { fill: none; stroke: #262626; stroke-width: 2; }
  .share { margin-left: 11px; width: 62px; height: 36px; background: #107c41; border-radius: 5px; display: flex; align-items: center; justify-content: center; gap: 14px; flex: none; }
  .share path { fill: none; stroke: #fff; stroke-width: 2; }

  .ribbon { height: 151px; flex: none; margin: 0 12px; background: #fff; border-radius: 11px; box-shadow: 0 2px 4px #c2c2cc; display: flex; }
  .group { position: relative; display: flex; flex-direction: column; padding-top: 4px; flex: none; }
  .group::after { content: ""; position: absolute; right: 0; top: 7px; bottom: 9px; width: 1px; background: #d0d0d0; }
  .g-clip { width: 155px; } .g-font { width: 416px; } .g-align { width: 200px; } .g-num { width: 160px; } .g-style { width: 198px; }
  .g-cell { width: 133px; } .g-edit { width: 147px; } .g-one { width: 86px; } .g-save { width: 103px; }
  .g-body { height: 117px; display: flex; }
  .col { flex-direction: column; }
  .g-label { display: flex; align-items: center; height: 27px; white-space: nowrap; }
  .g-label span { flex: 1; text-align: center; }
  .launch { width: 22px; display: grid; place-items: center; margin-top: 3px; padding-right: 2px; }
  .launch path { fill: none; stroke: #262626; stroke-width: 2; }
  .launch.off path { stroke: #c0c0c0; }
  .row { height: 39px; display: flex; align-items: center; }
  .ic { display: block; }
  .paste { width: 72px; margin-left: 13px; display: flex; flex-direction: column; align-items: center; color: #b0b0b0; padding-top: 8px; }
  .paste span { margin-top: 4px; }
  .stack { margin-left: 4px; }
  .stack .chev { margin-left: 6px; }

  .sel { display: grid; align-items: center; }
  .sel select, .sel .chev { grid-area: 1 / 1; }
  .sel .chev { justify-self: end; pointer-events: none; }
  .sel select { appearance: none; width: 100%; height: 36px; border: 1px solid #8a8a8a; border-radius: 5px; background: #fff; padding: 0 2px; outline: 0; }
  .fr1 { display: flex; align-items: center; padding: 14px 0 0 12px; }
  .fname { width: 254px; }
  .fsize { width: 57px; margin-left: 4px; }
  .gr { margin-left: 10px; } .sh { margin-left: 16px; }
  .fr2 { display: flex; align-items: center; height: 36px; margin-top: 12px; padding-left: 10px; }
  .biu { width: 38px; text-align: center; font-size: 20px; }
  .b { font-weight: 700; width: 40px; } .biu.i { font-style: italic; font-family: "Liberation Serif", serif; } .u { text-decoration: underline; }
  .vs { width: 1px; height: 36px; background: #d0d0d0; margin: 0 9px 0 5px; }
  .vs.tight { margin: 0 7px 0 2px; }
  .fr2 .ic + .chev, .wen + .chev { margin-left: 6px; }
  .fc { margin-left: 11px; }
  .wen { width: 24px; font-size: 12px; line-height: 13px; color: #a8a8a8; display: flex; flex-direction: column; align-items: center; }

  .g-align .row { padding-left: 10px; }
  .al { width: 39px; height: 36px; display: grid; place-items: center; }
  .al.on { width: 35px; margin: 0 2px; background: #ebebeb; border: 1px solid #5c5c5c; border-radius: 6px; }
  .al path { stroke: #333; stroke-width: 2; fill: none; }
  .dim .al path { stroke: #a8a8a8; }
  .m8 { margin-left: 8px; }
  .m8 + .chev { margin-left: 5px; }
  .dim .chev { margin-left: 3px; }
  .blue { fill: none; stroke: #2b88d8; stroke-width: 2; }

  .g-num .row { padding-left: 13px; }
  .g-num .row.in { padding-left: 19px; }
  .nf { width: 136px; }
  .nf select { background: #f0f0f0; border-color: #d8d8d8; color: #b8b8b8; opacity: 1; }
  .g-num .in > .chev { margin-left: 5px; }
  .pc { margin-left: 11px; fill: none; stroke: #9c9c9c; stroke-width: 2; }
  .cm { margin-left: 21px; }
  .dec { font-size: 15px; fill: #a8a8a8; }
  .dec path { fill: none; stroke: #a8a8a8; stroke-width: 2; }
  .d2 { margin-left: 14px; }

  .cmd { gap: 7px; padding-left: 18px; white-space: nowrap; }
  .cmd.off span { color: #b0b0b0; }
  .cmd > .chev { margin-left: -7px; }
  .sp { width: 6px; }
  .g-edit .row { padding-left: 19px; }
  .g-edit .row > .chev { margin-left: 4px; }
  .g-edit .row > .az { margin-left: 14px; }
  .g-edit .row > .az + .chev { margin-left: 3px; }
  .w3 { width: 3px; }
  .g-edit .row > .w3 ~ .az { margin-left: 11px; }
  .tall { height: 117px; display: flex; flex-direction: column; align-items: center; justify-content: flex-end; gap: 4px; line-height: 23px; white-space: nowrap; padding-bottom: 13px; }
  .tall.off { color: #b0b0b0; }
  .collapse { margin: auto 14px 13px auto; }
  .collapse svg, .name svg, .formula svg { fill: none; stroke: #333; stroke-width: 2; }

  .fbar { flex: none; display: flex; align-items: center; padding: 12px 12px 10px; font-size: 20px; }
  .name, .fx, .formula { height: 37px; background: #fff; border: 1px solid #d4d4da; border-radius: 6px; display: flex; align-items: center; }
  .name { width: 151px; padding: 0 6px; }
  .name input, .formula input { flex: 1; min-width: 0; border: 0; outline: 0; padding: 0; background: none; }
  .dots { margin: 0 13px 0 14px; fill: #444; }
  .fx { width: 109px; padding: 0 7px 0 8px; justify-content: space-between; }
  .fx svg { fill: none; stroke: #b8b8b8; stroke-width: 2; }
  .fx em { font: italic 24px/30px "Liberation Serif", serif; color: #333; }
  .formula { flex: 1; margin-left: 7px; padding-right: 6px; }
  .formula svg { stroke: #777; }

  .body { position: relative; flex: 1; min-height: 0; display: flex; }
  .work { flex: 1; min-width: 0; display: flex; flex-direction: column; }
  .sheet { flex: 1; min-height: 0; display: flex; }
  .grid { position: relative; flex: 1; min-width: 0; overflow: hidden; background: #fff; }
  table { width: 100%; table-layout: fixed; border-collapse: separate; border-spacing: 0; font: 20px/24px "Noto Sans CJK SC", sans-serif; color: #111; }
  .c0 { width: 40px; } .cG { width: 119px; } .cH { width: 119px; } .cN { width: 124px; } .cP { width: 57px; } .cQ { width: 176px; }
  th { font-weight: 400; background: #f0f0f0; color: #555; padding: 0; border-bottom: 1px solid #dadada; border-right: 1px solid #a6a6a6; height: 25px; }
  thead th { height: 26px; border-right-color: #d8d8d8; border-bottom-color: #a0a0a0; }
  .corner svg { margin-left: 18px; }
  td { height: 25px; padding: 0 3px; border-right: 1px solid #dedede; border-bottom: 1px solid #dedede; white-space: nowrap; }
  .first { padding-left: 44px; }
  .num { text-align: right; }
  .barcell, .sparkcell { padding: 0; }
  .stackbar { display: grid; height: 24px; padding: 0 1px; }
  .track, .stackbar span { grid-area: 1 / 1; }
  .stackbar span { padding-left: 2px; }
  .track { padding: 1px 0 2px; margin-right: 1px; }
  .bar { height: 21px; border: 1px solid #ffb628; background: linear-gradient(90deg, #ffb628, #fff0d6); }
  .pctcell { display: flex; align-items: baseline; height: 24px; }
  .pct { font: 17px/17px "Liberation Mono", monospace; }
  .mini, .chart, .cbtns { position: absolute; }
  .mini { left: 40px; top: 26px; overflow: hidden; }
  .chart { left: 778px; top: 227px; font-family: "Noto Sans CJK SC", sans-serif; }
  .cbtns { left: 729px; top: 238px; display: flex; flex-direction: column; gap: 15px; }
  .cbtns button { width: 42px; height: 42px; background: #fff; border: 1px solid #555; display: grid; place-items: center; }
  .cbtns .plus { background: #86bfa0; border-color: #4a9a6c; }
  .vscroll, .pscroll { width: 26px; border-radius: 13px; background: #f5f5f5; display: flex; flex-direction: column; align-items: center; fill: #707070; flex: none; }
  .vscroll { margin: 0 3px; padding: 7px 0 4px; }
  .vscroll i { width: 12px; height: 26px; border-radius: 6px; background: #707070; margin-top: 7px; }
  .vscroll span { flex: 1; }

  .foot { height: 48px; flex: none; display: flex; align-items: flex-start; padding-right: 29px; border-top: 1px solid #d4d4d8; font-size: 21px; white-space: nowrap; }
  .arrows { display: flex; gap: 39px; padding: 14px 0 0 35px; }
  .arrows path { fill: none; stroke: #999; stroke-width: 2; }
  .st { margin-left: 78px; padding: 0 16px 0 8px; height: 30px; margin-top: 8px; border-right: 1px solid #ccc; }
  .st.cur { margin-left: 6px; padding: 4px 14px 0; height: 42px; background: #fff; border: 0; border-radius: 0 0 6px 6px; margin-top: -1px; }
  .st.cur span { display: block; height: 32px; line-height: 26px; border-bottom: 3px solid #107c41; }
  .add { margin-left: 6px; margin-top: 8px; padding: 0 0 0 62px; border-left: 1px solid #ccc; height: 30px; }
  .add path { stroke: #333; stroke-width: 2; }
  .foot .dots { margin: 14px 22px 0 auto; }
  .hscroll { width: 539px; height: 26px; margin-top: 9px; background: #f5f5f5; border-radius: 13px; display: flex; align-items: center; padding: 0 7px; fill: #707070; }
  .hscroll i { width: 244px; height: 12px; border-radius: 6px; background: #707070; margin: 0 auto 0 119px; }

  .pane { position: relative; width: 427px; flex: none; background: #efefef; border-left: 1px solid #d2d2da; overflow: hidden; display: flex; flex-direction: column; }
  .p-head { display: flex; align-items: center; padding: 13px 24px 0 15px; height: 53px; flex: none; }
  h2 { margin: 0; font-size: 32px; line-height: 40px; font-weight: 400; flex: 1; }
  .win2 { margin-left: 30px; }
  .win2 svg, .p-tabs svg { fill: none; stroke: #333; stroke-width: 2; }
  .p-tabs { display: flex; align-items: center; padding: 1px 0 0 22px; height: 50px; flex: none; }
  .p-tabs svg { margin: 3px 25px 0 9px; stroke: #2b88d8; }
  .p-icons { display: flex; align-items: center; padding: 3px 0 0 24px; height: 51px; flex: none; }
  .p-icons button { width: 34px; display: grid; place-items: center; margin-right: 22px; }
  .p-icons .on { width: 46px; height: 46px; background: #fff; border: 1px solid #666; border-radius: 6px; margin-left: -6px; }
  .rule { height: 21px; flex: none; margin: 0 16px 0 15px; border-bottom: 2px solid #d0d0d0; padding-top: 6px; }
  .rule svg { margin-left: 179px; }
  .p-scroll { height: 568px; flex: none; display: flex; padding-right: 16px; }
  .opts { flex: 1; height: 568px; overflow: hidden; padding: 12px 5px 0 47px; }
  h3 { margin: 0; font: inherit; }
  .opts u { text-underline-offset: 3px; }
  .ck, .rd { display: flex; align-items: center; gap: 8px; padding-left: 15px; height: 39px; }
  .opts h3 + .ck { margin-top: 1px; }
  .ck input { appearance: none; margin: 0; width: 20px; height: 20px; background: #fff; border: 2px solid #858585; border-radius: 3px; display: grid; place-items: center; }
  .ck input:checked { background: #107c41; border-color: #107c41; }
  .ck input:checked::after { content: ""; width: 10px; height: 5px; border: solid #fff; border-width: 0 0 2px 2px; transform: translateY(-2px) rotate(-45deg); }
  .sep-row { display: flex; align-items: center; justify-content: space-between; height: 34px; margin-top: 8px; padding-left: 15px; }
  .psel { width: 128px; }
  .psel select { height: 34px; padding: 0 8px; }
  .reset { margin: 9px 0 0 15px; width: 156px; height: 36px; background: #fff; border: 1px solid #8a8a8a; border-radius: 5px; white-space: nowrap; }
  .h2nd { margin: 9px 0 14px; }
  .h2nd + .rd { margin-top: 15px; }
  .rd { height: 36px; gap: 9px; }
  .rd input { appearance: none; margin: 0; width: 18px; height: 18px; border: 2px solid #858585; border-radius: 50%; background: #f6f6f6; }
  .rd input:checked { border: 5px solid #107c41; background: #fff; }
  .pscroll { padding: 7px 0; margin-top: 7px; height: 560px; }
  .pscroll i { width: 12px; height: 427px; border-radius: 6px; background: #707070; margin: 33px 0 auto; }
  .mark { margin: auto 15px 6px auto; font: 14px/24px "Liberation Sans", "Noto Sans CJK SC", sans-serif; color: #8a8a8a; text-shadow: 1px 1px #fff; }
  .red { position: absolute; border: 3px solid #ed1c24; pointer-events: none; }
  .r1 { left: 44px; top: 277px; width: 165px; height: 95px; }
  .r2 { left: 34px; top: 685px; width: 202px; height: 42px; }
  .cursor { position: absolute; left: 64px; top: 643px; }
  .arrow { position: absolute; left: 1259px; top: 401px; pointer-events: none; }
</style>
